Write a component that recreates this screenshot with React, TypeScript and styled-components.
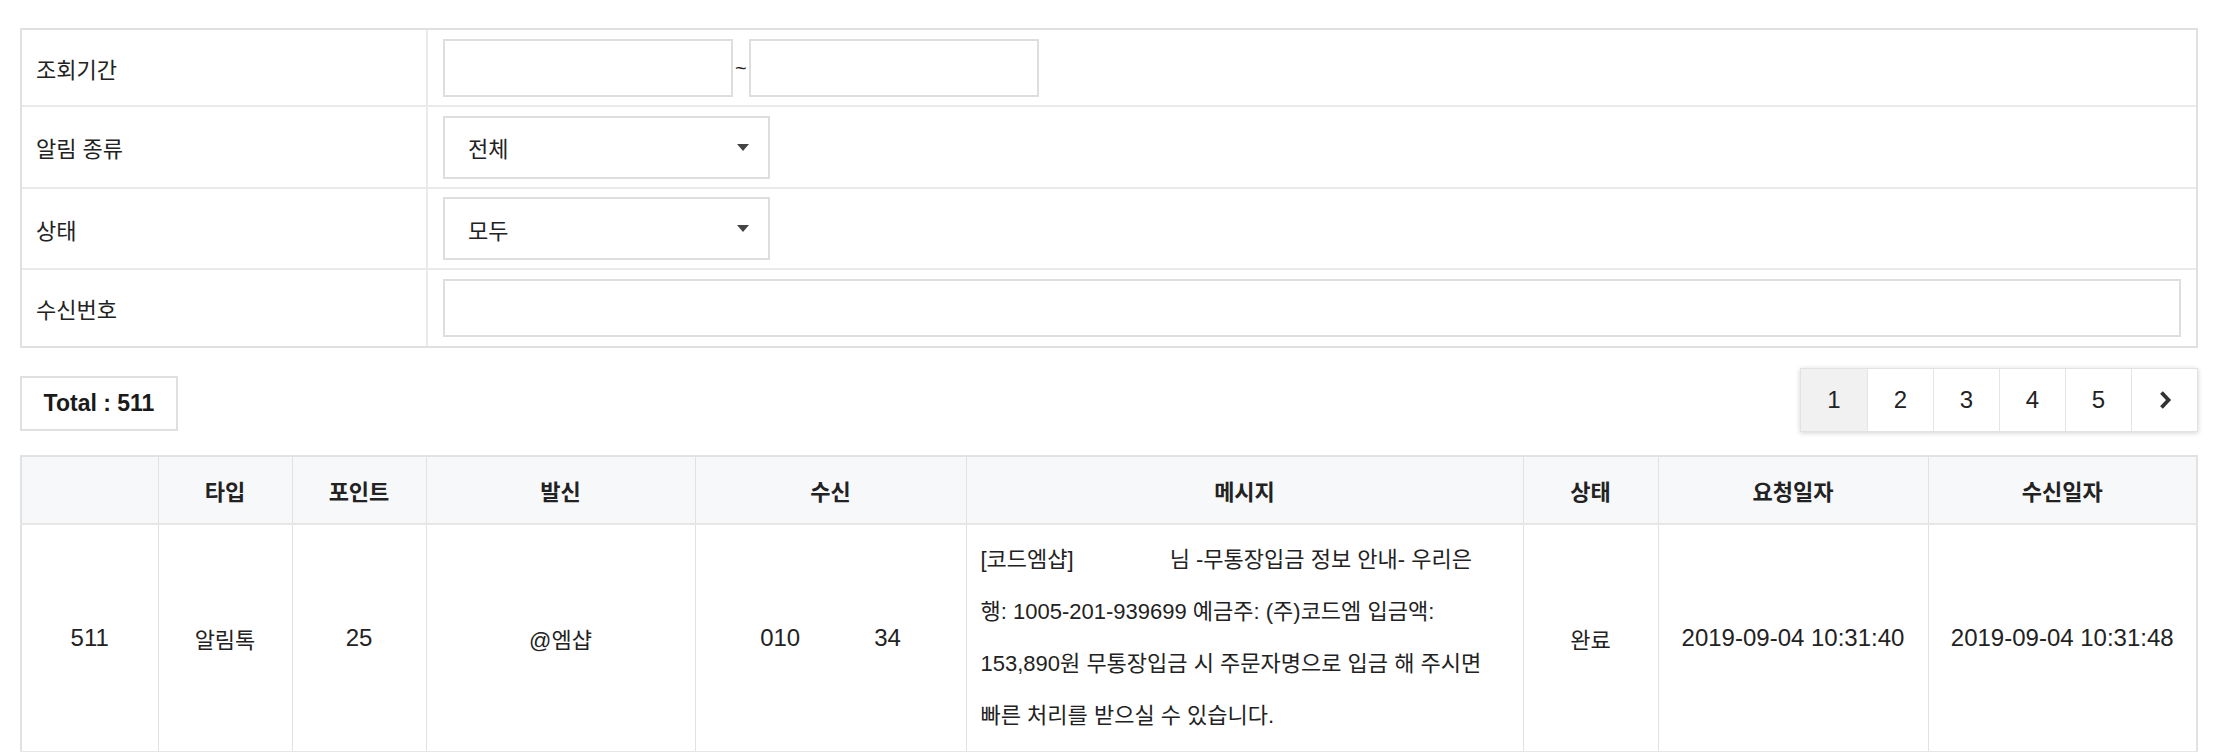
import React from 'react'
import styled, { createGlobalStyle } from 'styled-components'

const GlobalStyle = createGlobalStyle`
  * {
    box-sizing: border-box;
  }
  body {
    margin: 0;
    background: #fff;
    color: #222;
    font-family: 'Liberation Sans', 'Noto Sans CJK KR', sans-serif;
    font-size: 22px;
  }
`

const columns = [137, 134, 134, 269, 271, 557, 135, 270]

type MessageLine = { text: string; lead?: string; gap?: number }

type Row = {
  no: number
  type: string
  point: number
  sender: string
  lines: MessageLine[]
  status: string
  requestedAt: string
  receivedAt: string
}

const rows: Row[] = [
  {
    no: 511,
    type: '알림톡',
    point: 25,
    sender: '@엠샵',
    lines: [
      { lead: '[코드엠샵]', gap: 96, text: '님 -무통장입금 정보 안내- 우리은' },
      { text: '행: 1005-201-939699 예금주: (주)코드엠 입금액:' },
      { text: '153,890원 무통장입금 시 주문자명으로 입금 해 주시면' },
      { text: '빠른 처리를 받으실 수 있습니다.' },
    ],
    status: '완료',
    requestedAt: '2019-09-04 10:31:40',
    receivedAt: '2019-09-04 10:31:48',
  },
]

const App = () => {
  return (
    <>
      <GlobalStyle />
      <St.Page>
        <St.SearchBox>
          <St.SearchRow $h={77}>
            <St.Label>조회기간</St.Label>
            <St.Field>
              <St.Input $w={290} />
              <St.Tilde>~</St.Tilde>
              <St.Input $w={290} />
            </St.Field>
          </St.SearchRow>
          <St.SearchRow $h={82}>
            <St.Label>알림 종류</St.Label>
            <St.Field>
              <St.Select>
                전체
                <St.Caret />
              </St.Select>
            </St.Field>
          </St.SearchRow>
          <St.SearchRow $h={81}>
            <St.Label>상태</St.Label>
            <St.Field>
              <St.Select>
                모두
                <St.Caret />
              </St.Select>
            </St.Field>
          </St.SearchRow>
          <St.SearchRow $h={76}>
            <St.Label>수신번호</St.Label>
            <St.Field>
              <St.Input />
            </St.Field>
          </St.SearchRow>
        </St.SearchBox>

        <St.Toolbar>
          <St.Total>Total : 511</St.Total>
          <St.Pagination>
            {[1, 2, 3, 4, 5].map((n) => (
              <St.PageButton key={n} $active={n === 1}>
                {n}
              </St.PageButton>
            ))}
            <St.PageButton>
              <svg width="14" height="20" viewBox="0 0 14 20">
                <path d="M3.5 2.5 L10.5 10 L3.5 17.5" fill="none" stroke="#333" strokeWidth="3.8" />
              </svg>
            </St.PageButton>
          </St.Pagination>
        </St.Toolbar>

        <St.List>
          <colgroup>
            {columns.map((w, i) => (
              <col key={i} style={{ width: w }} />
            ))}
            <col />
          </colgroup>
          <thead>
            <tr>
              <St.Th />
              <St.Th>타입</St.Th>
              <St.Th>포인트</St.Th>
              <St.Th>발신</St.Th>
              <St.Th>수신</St.Th>
              <St.Th>메시지</St.Th>
              <St.Th>상태</St.Th>
              <St.Th>요청일자</St.Th>
              <St.Th>수신일자</St.Th>
            </tr>
          </thead>
          <tbody>
            {rows.map((row) => (
              <tr key={row.no}>
                <St.Td $latin>{row.no}</St.Td>
                <St.Td>{row.type}</St.Td>
                <St.Td $latin>{row.point}</St.Td>
                <St.Td>{row.sender}</St.Td>
                <St.Td $latin>
                  010
                  <St.Masked $w={74} />
                  34
                </St.Td>
                <St.Td $align="left">
                  {row.lines.map((line, i) => (
                    <St.Line key={i}>
                      {line.lead}
                      {line.gap && <St.Masked $w={line.gap} />}
                      {line.text}
                    </St.Line>
                  ))}
                </St.Td>
                <St.Td>{row.status}</St.Td>
                <St.Td $latin>{row.requestedAt}</St.Td>
                <St.Td $latin>{row.receivedAt}</St.Td>
              </tr>
            ))}
          </tbody>
        </St.List>
      </St.Page>
    </>
  )
}

export default App

const St = {
  Page: styled.div`
    padding: 28px 24px 0 20px;
  `,
  SearchBox: styled.div`
    border: 2px solid #e0e0e0;
  `,
  SearchRow: styled.div<{ $h: number }>`
    display: grid;
    grid-template-columns: 406px 1fr;
    height: ${(props) => props.$h}px;
    border-bottom: 2px solid #eaeaea;

    &:last-child {
      border-bottom: none;
    }
  `,
  Label: styled.div`
    display: flex;
    align-items: center;
    padding-left: 14px;
    border-right: 2px solid #eaeaea;
  `,
  Field: styled.div`
    display: flex;
    align-items: center;
    padding: 0 15px;
  `,
  Input: styled.div<{ $w?: number }>`
    width: ${(props) => (props.$w ? `${props.$w}px` : '100%')};
    height: 58px;
    border: 2px solid #dedede;
    background: #fff;
  `,
  Tilde: styled.span`
    font-size: 20px;
    margin: 0 2px;
    line-height: 1;
  `,
  Select: styled.div`
    display: flex;
    align-items: center;
    justify-content: space-between;
    width: 327px;
    height: 63px;
    padding: 0 19px 0 23px;
    border: 2px solid #dedede;
    background: #fff;
  `,
  Caret: styled.span`
    width: 0;
    height: 0;
    border-left: 6px solid transparent;
    border-right: 6px solid transparent;
    border-top: 7px solid #444;
  `,
  Toolbar: styled.div`
    display: flex;
    align-items: flex-end;
    justify-content: space-between;
    margin-top: 20px;
  `,
  Total: styled.div`
    display: flex;
    align-items: center;
    justify-content: center;
    width: 158px;
    height: 55px;
    margin-bottom: 1px;
    border: 2px solid #e0e0e0;
    font-size: 23px;
    font-weight: 700;
    color: #1a1a1a;
  `,
  Pagination: styled.div`
    display: flex;
    border: 1px solid #e2e2e2;
    box-shadow: 0 1px 5px rgba(0, 0, 0, 0.18);
  `,
  PageButton: styled.div<{ $active?: boolean }>`
    display: flex;
    align-items: center;
    justify-content: center;
    width: 66px;
    height: 62px;
    font-size: 24px;
    color: #222;
    background: ${(props) => (props.$active ? '#f1f1f1' : '#fff')};

    & + & {
      border-left: 1px solid #e4e4e4;
    }
  `,
  List: styled.table`
    width: 100%;
    margin-top: 23px;
    table-layout: fixed;
    border-collapse: collapse;
    border: 2px solid #e2e2e2;
  `,
  Th: styled.th`
    height: 68px;
    background: #f7f8fa;
    font-weight: 700;
    text-align: center;
    border-left: 1px solid #e2e2e2;
    border-bottom: 2px solid #e6e6e6;
  `,
  Td: styled.td<{ $align?: 'left' | 'center'; $latin?: boolean }>`
    height: 225px;
    padding: 9px 14px;
    font-size: ${(props) => (props.$latin ? '24px' : '22px')};
    text-align: ${(props) => props.$align ?? 'center'};
    white-space: nowrap;
    border-left: 1px solid #e2e2e2;
    border-bottom: 2px solid #e6e6e6;
  `,
  Line: styled.div`
    line-height: 52px;
    white-space: nowrap;
  `,
  Masked: styled.span<{ $w: number }>`
    display: inline-block;
    width: ${(props) => props.$w}px;
  `,
}
